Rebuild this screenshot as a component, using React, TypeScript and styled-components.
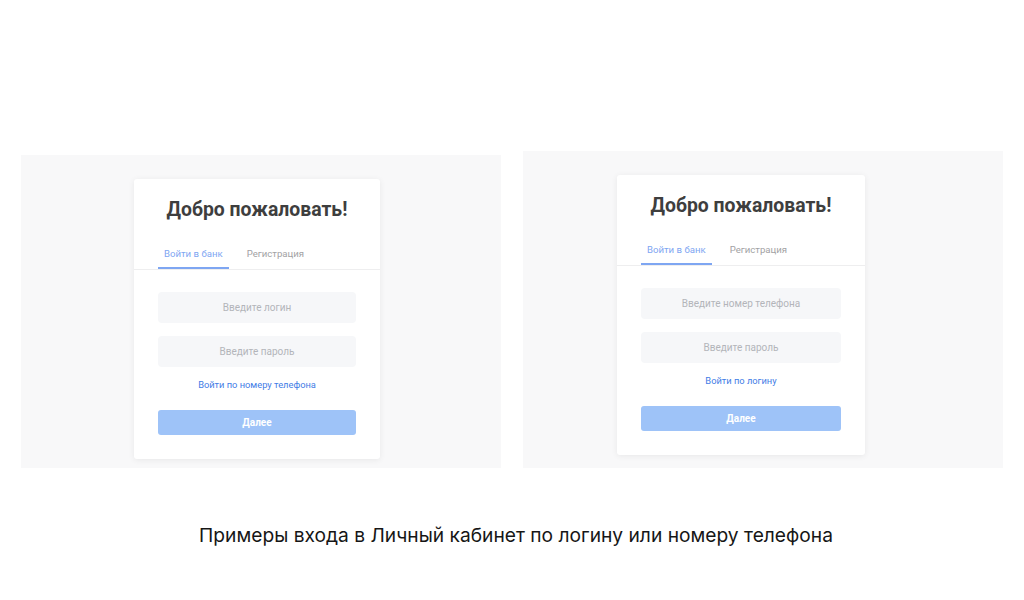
import React from 'react';
import styled, { createGlobalStyle } from 'styled-components';

const GlobalStyle = createGlobalStyle`
    body {
        margin: 0;
        background: #ffffff;
        font-family: Roboto, "Liberation Sans", Arial, sans-serif;
    }
`;

interface ILoginCardProps {
    loginPlaceholder: string,
    switchText: string,
}

const LoginCard = ({ loginPlaceholder, switchText }: ILoginCardProps) => {
    return (
        <Card>
            <Title>Добро пожаловать!</Title>
            <Tabs>
                <Tab $active>Войти в банк</Tab>
                <Tab>Регистрация</Tab>
            </Tabs>
            <Form>
                <Field placeholder={loginPlaceholder} />
                <Field placeholder='Введите пароль' type='password' />
                <SwitchLink href='#'>{switchText}</SwitchLink>
                <NextButton type='button'>Далее</NextButton>
            </Form>
        </Card>
    )
};

export default function App() {
    return (
        <>
            <GlobalStyle />
            <Page>
                <Row>
                    <Panel $height={313} $left={113} $right={121}>
                        <LoginCard loginPlaceholder='Введите логин' switchText='Войти по номеру телефона' />
                    </Panel>
                    <Panel $height={317} $left={94} $right={138}>
                        <LoginCard loginPlaceholder='Введите номер телефона' switchText='Войти по логину' />
                    </Panel>
                </Row>
                <Caption>Примеры входа в Личный кабинет по логину или номеру телефона</Caption>
            </Page>
        </>
    )
};

const Page = styled.div`
    width: 1024px;
    height: 600px;
    display: flex;
    flex-direction: column;
    align-items: center;
    padding-top: 151px;
    box-sizing: border-box;
`;

const Row = styled.div`
    display: flex;
    align-items: flex-end;
    gap: 22px;
    width: 100%;
    padding-left: 21px;
    box-sizing: border-box;
`;

const Panel = styled.div<{ $height: number, $left: number, $right: number }>`
    width: 480px;
    height: ${p => p.$height}px;
    box-sizing: border-box;
    background: #f8f8f9;
    padding: 24px ${p => p.$right}px 0 ${p => p.$left}px;
`;

const Card = styled.div`
    background: #ffffff;
    border-radius: 3px;
    box-shadow: 0 1px 6px rgba(0, 0, 0, 0.07);
    padding: 19px 0 24px;
    display: flex;
    flex-direction: column;
`;

const Title = styled.h1`
    margin: 0;
    text-align: center;
    font-size: 19.4px;
    line-height: 24px;
    font-weight: 700;
    color: #3e3e3e;
`;

const Tabs = styled.div`
    display: flex;
    gap: 12px;
    margin-top: 25px;
    padding: 0 24px;
    border-bottom: 1px solid #eeeeef;
`;

const Tab = styled.div<{ $active?: boolean }>`
    font-size: 9.6px;
    line-height: 14px;
    padding: 0 6px 6px;
    color: ${p => p.$active ? '#7ea6f2' : '#a2a2a4'};
    border-bottom: 2px solid ${p => p.$active ? '#7ea6f2' : 'transparent'};
`;

const Form = styled.div`
    display: flex;
    flex-direction: column;
    padding: 22px 24px 0;
`;

const Field = styled.input`
    box-sizing: border-box;
    height: 31px;
    padding: 0;
    border: none;
    border-radius: 4px;
    background: #f6f7f9;
    outline: none;
    text-align: center;
    font-family: inherit;
    font-size: 10px;
    color: #444;
    margin: 0 0 13px;
    &::placeholder {
        color: #b3b5ba;
    }
`;

const SwitchLink = styled.a`
    margin-top: -1px;
    align-self: center;
    font-size: 9.3px;
    line-height: 12px;
    color: #3f7ce6;
    text-decoration: none;
`;

const NextButton = styled.button`
    box-sizing: border-box;
    margin: 19px 0 0;
    padding: 0;
    height: 25px;
    border: none;
    border-radius: 3px;
    background: #9ec3f8;
    color: #ffffff;
    font-family: inherit;
    font-size: 10px;
    font-weight: 700;
`;

const Caption = styled.p`
    margin: 56px 0 0 8px;
    font-family: Inter, Roboto, "Liberation Sans", sans-serif;
    font-size: 19.2px;
    line-height: 23px;
    color: #161616;
`;
